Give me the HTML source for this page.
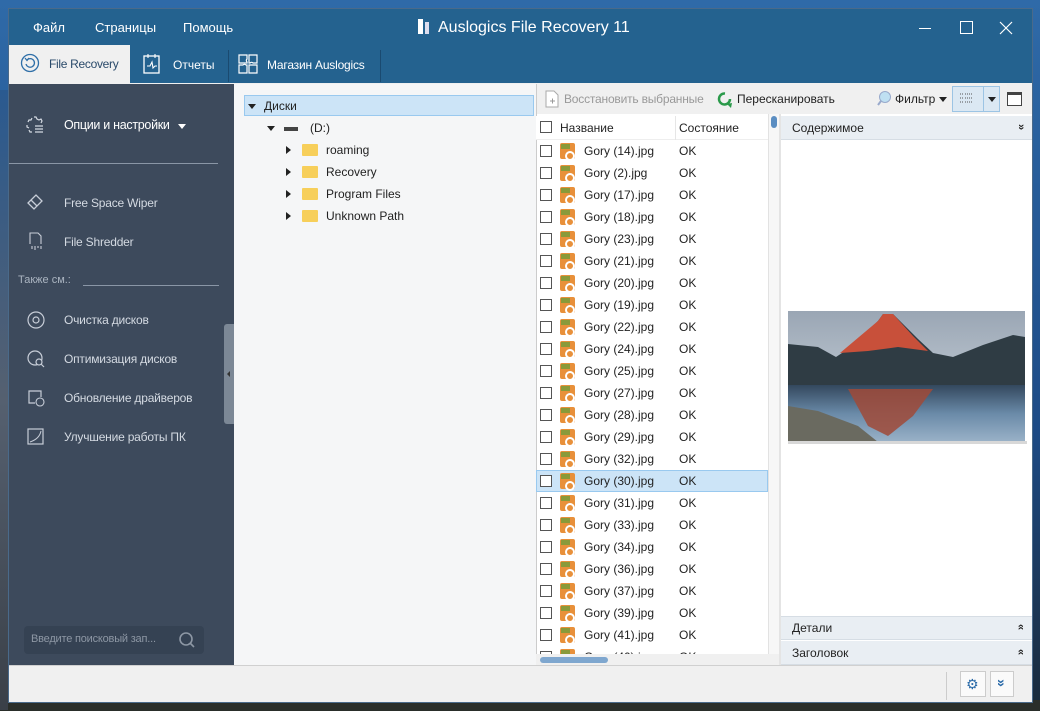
<!DOCTYPE html>
<html><head><meta charset="utf-8"><style>
*{margin:0;padding:0;box-sizing:border-box}
body{width:1040px;height:711px;overflow:hidden;position:relative;font-family:"Liberation Sans","DejaVu Sans",sans-serif;font-size:12px;color:#222;background:linear-gradient(#2f6aa8 0,#1d4b86 60%,#1a2a3a 100%)}
.a{position:absolute}
.w{color:#fff}
.row{position:absolute;left:536px;width:232px;height:22px}
.row .cb{position:absolute;left:4px;top:5px;width:12px;height:12px;border:1px solid #555;background:#fff}
.row .ic{position:absolute;left:24px;top:3px;width:15px;height:16px;background:#e8903a;border-radius:2px}
.row .ic:before{content:"";position:absolute;left:1px;top:1px;width:9px;height:5px;background:#8a9a3a}
.row .ic:after{content:"";position:absolute;left:5px;top:8px;width:6px;height:6px;border-radius:50%;border:2px solid #fff}
.row .n{position:absolute;left:48px;top:4px}
.row .s{position:absolute;left:143px;top:4px}
.side{color:#d4dae2;font-size:12px;letter-spacing:-0.2px}
.tri{width:0;height:0;border-left:4px solid transparent;border-right:4px solid transparent;border-top:5px solid #222}
.tr{width:0;height:0;border-top:4px solid transparent;border-bottom:4px solid transparent;border-left:5px solid #222}
.fold{width:16px;height:12px;background:#f7cf5a;border-radius:1px}
.chev{font-size:11px;font-weight:bold}
</style></head><body>
<div class="a" style="left:0;top:700px;width:1040px;height:11px;background:#2a2e2a"></div>
<div class="a" style="left:0;top:90px;width:8px;height:620px;background:linear-gradient(#2a5a90,#556070,#3a4048)"></div>
<div class="a" style="left:8px;top:8px;width:1025px;height:695px;background:#f0f0f0;border:1px solid #4a6a8a"></div>
<div class="a" style="left:9px;top:9px;width:1023px;height:74px;background:#24628f"></div>
<div class="a w" style="left:33px;top:20px;font-size:13px">Файл</div>
<div class="a w" style="left:95px;top:20px;font-size:13px">Страницы</div>
<div class="a w" style="left:183px;top:20px;font-size:13px">Помощь</div>
<div class="a" style="left:418px;top:19px;width:5px;height:15px;background:#fff"></div>
<div class="a" style="left:425px;top:22px;width:4px;height:12px;background:#dde"></div>
<div class="a w" style="left:438px;top:19px;font-size:16px">Auslogics File Recovery 11</div>
<div class="a" style="left:919px;top:28px;width:12px;height:1px;background:#fff"></div>
<div class="a" style="left:960px;top:21px;width:13px;height:13px;border:1px solid #fff"></div>
<svg class="a" style="left:999px;top:21px" width="14" height="14"><path d="M1 1L13 13M13 1L1 13" stroke="#fff" stroke-width="1.2"/></svg>
<div class="a" style="left:9px;top:45px;width:121px;height:38px;background:#f0f0f0"></div>
<svg class="a" style="left:20px;top:53px" width="20" height="20"><circle cx="10" cy="10" r="8.5" fill="none" stroke="#2f6fa8" stroke-width="1.3"/><path d="M7 7A4.3 4.3 0 1 1 6 11" fill="none" stroke="#2f6fa8" stroke-width="1.3"/><path d="M5 5L7 7.5L9 5" fill="none" stroke="#2f6fa8" stroke-width="1.2"/></svg>
<div class="a" style="left:49px;top:57px;color:#2a4a6a;letter-spacing:-0.3px">File Recovery</div>
<svg class="a" style="left:142px;top:53px" width="20" height="22"><rect x="2" y="3" width="15" height="17" fill="none" stroke="#fff" stroke-width="1.3"/><path d="M6 1v4M13 1v4M5 13h3l2-4 1 6 2-2h2" fill="none" stroke="#fff" stroke-width="1.1"/></svg>
<div class="a w" style="left:173px;top:58px">Отчеты</div>
<div class="a" style="left:228px;top:50px;width:1px;height:32px;background:#1a4a70"></div>
<svg class="a" style="left:236px;top:52px" width="24" height="24"><path d="M3 3h8v4a2 2 0 0 0 0 3v1H3zM13 3h8v8h-4a2 2 0 0 0-3 0h-1zM3 13h4a2 2 0 0 1 3 0h1v8H3zM13 13h8v8h-8z" fill="none" stroke="#fff" stroke-width="1.2"/></svg>
<div class="a w" style="left:267px;top:58px;letter-spacing:-0.2px">Магазин Auslogics</div>
<div class="a" style="left:380px;top:50px;width:1px;height:32px;background:#1a4a70"></div>
<div class="a" style="left:9px;top:84px;width:225px;height:581px;background:#3d4a5c"></div>
<svg class="a" style="left:25px;top:115px" width="22" height="20"><path d="M9 2l2 0 1 2 2 1 2-1 1 2-1 2M3 7l1-2 2 0 1-2M2 10v2l2 1M4 15l1 2 2 0" fill="none" stroke="#d4dae2" stroke-width="1.2"/><path d="M10 11h8M10 14h8M10 17h8" stroke="#d4dae2" stroke-width="1.2"/></svg>
<div class="a" style="left:64px;top:118px;color:#fff;font-size:12.5px;letter-spacing:-0.3px">Опции и настройки</div>
<div class="a tri" style="left:178px;top:124px;border-top-color:#fff"></div>
<div class="a" style="left:9px;top:163px;width:209px;height:1px;background:#8a96a6"></div>
<svg class="a" style="left:26px;top:193px" width="20" height="18"><path d="M2 10l8-8 6 6-8 8zM5 7l6 6" fill="none" stroke="#c8ced8" stroke-width="1.3"/></svg>
<div class="a side" style="left:64px;top:196px">Free Space Wiper</div>
<svg class="a" style="left:27px;top:231px" width="18" height="20"><path d="M3 13V2h8l3 3v8M5 15v3M8 15v4M11 15v2M14 15v3" fill="none" stroke="#c8ced8" stroke-width="1.1"/></svg>
<div class="a side" style="left:64px;top:235px">File Shredder</div>
<div class="a" style="left:18px;top:274px;color:#aab4c0;font-size:11px">Также см.:</div>
<div class="a" style="left:83px;top:285px;width:136px;height:1px;background:#8a96a6"></div>
<svg class="a" style="left:26px;top:310px" width="20" height="20"><circle cx="10" cy="10" r="8" fill="none" stroke="#c8ced8" stroke-width="1.2"/><circle cx="10" cy="10" r="3" fill="none" stroke="#c8ced8" stroke-width="1.2"/></svg>
<div class="a side" style="left:64px;top:313px">Очистка дисков</div>
<svg class="a" style="left:26px;top:349px" width="20" height="20"><circle cx="9" cy="9" r="7" fill="none" stroke="#c8ced8" stroke-width="1.2"/><circle cx="13" cy="13" r="3" fill="#3d4a5c" stroke="#c8ced8" stroke-width="1.2"/><path d="M15 15l3 3" stroke="#c8ced8" stroke-width="1.2"/></svg>
<div class="a side" style="left:64px;top:352px">Оптимизация дисков</div>
<svg class="a" style="left:26px;top:388px" width="20" height="20"><path d="M9 15H3V3h12v6" fill="none" stroke="#c8ced8" stroke-width="1.2"/><circle cx="14" cy="14" r="4" fill="none" stroke="#c8ced8" stroke-width="1.1"/></svg>
<div class="a side" style="left:64px;top:391px">Обновление драйверов</div>
<svg class="a" style="left:26px;top:427px" width="20" height="20"><rect x="2" y="2" width="15" height="15" fill="none" stroke="#c8ced8" stroke-width="1.2"/><path d="M4 15C10 13 14 9 15 4" fill="none" stroke="#c8ced8"/></svg>
<div class="a side" style="left:64px;top:430px">Улучшение работы ПК</div>
<div class="a" style="left:224px;top:324px;width:10px;height:100px;background:#7c8896;border-radius:3px 0 0 3px"></div>
<div class="a" style="left:227px;top:371px;width:0;height:0;border-top:3px solid transparent;border-bottom:3px solid transparent;border-right:3px solid #333"></div>
<div class="a" style="left:24px;top:626px;width:180px;height:28px;background:#354253;border-radius:4px"></div>
<div class="a" style="left:31px;top:633px;color:#8d97a4;font-size:11px;letter-spacing:-0.2px">Введите поисковый зап...</div>
<svg class="a" style="left:178px;top:631px" width="18" height="18"><circle cx="8" cy="8" r="6" fill="none" stroke="#8d97a4" stroke-width="1.6"/><path d="M12 12l4 4" stroke="#8d97a4" stroke-width="1.6"/></svg>
<div class="a" style="left:234px;top:84px;width:302px;height:581px;background:#f5f6f7"></div>
<div class="a" style="left:244px;top:95px;width:290px;height:21px;background:#cce4f7;border:1px solid #99c9ef"></div>
<div class="a tri" style="left:248px;top:104px"></div>
<div class="a" style="left:264px;top:99px">Диски</div>
<div class="a tri" style="left:267px;top:126px"></div>
<div class="a" style="left:284px;top:127px;width:14px;height:4px;background:#444"></div>
<div class="a" style="left:310px;top:121px">(D:)</div>
<div class="a tr" style="left:286px;top:146px"></div><div class="a fold" style="left:302px;top:144px"></div><div class="a" style="left:326px;top:143px">roaming</div>
<div class="a tr" style="left:286px;top:168px"></div><div class="a fold" style="left:302px;top:166px"></div><div class="a" style="left:326px;top:165px">Recovery</div>
<div class="a tr" style="left:286px;top:190px"></div><div class="a fold" style="left:302px;top:188px"></div><div class="a" style="left:326px;top:187px">Program Files</div>
<div class="a tr" style="left:286px;top:212px"></div><div class="a fold" style="left:302px;top:210px"></div><div class="a" style="left:326px;top:209px">Unknown Path</div>
<div class="a" style="left:536px;top:84px;width:496px;height:30px;background:#f0f0f0;border-left:1px solid #ccc"></div>
<svg class="a" style="left:544px;top:90px" width="16" height="18"><path d="M2 1h8l4 4v12H2z" fill="#fff" stroke="#aaa"/><path d="M6 11h5M8.5 8.5v5" stroke="#999"/></svg>
<div class="a" style="left:564px;top:92px;color:#999;letter-spacing:-0.2px">Восстановить выбранные</div>
<svg class="a" style="left:716px;top:90px" width="18" height="18"><path d="M14 9A5.5 5.5 0 1 1 9 3.5" fill="none" stroke="#2a9a4a" stroke-width="2.5"/><path d="M11 14l5-1-1 5z" fill="#2a9a4a"/></svg>
<div class="a" style="left:737px;top:92px">Пересканировать</div>
<svg class="a" style="left:876px;top:90px" width="16" height="17"><circle cx="9" cy="7" r="5.5" fill="#bfe0f2" stroke="#9ac"/><path d="M5 11l-3 4" stroke="#9ac" stroke-width="2"/></svg>
<div class="a" style="left:895px;top:92px">Фильтр</div>
<div class="a tri" style="left:939px;top:97px"></div>
<div class="a" style="left:952px;top:86px;width:48px;height:26px;background:#dbe8f3;border:1px solid #9cc4e4"></div>
<div class="a" style="left:983px;top:86px;width:1px;height:26px;background:#9cc4e4"></div>
<svg class="a" style="left:958px;top:92px" width="18" height="14"><path d="M2 2h3M2 6h3M2 10h3M7 2h8M7 6h8M7 10h8" stroke="#555" stroke-dasharray="1 1"/></svg>
<div class="a tri" style="left:988px;top:97px"></div>
<div class="a" style="left:1007px;top:92px;width:15px;height:14px;border:1px solid #444;border-top-width:3px;background:#fff"></div>
<div class="a" style="left:536px;top:114px;width:244px;height:551px;background:#fff;border-left:1px solid #ccc"></div>
<div class="a" style="left:536px;top:116px;width:232px;height:24px;background:#fff;border-bottom:1px solid #eee"></div>
<div class="a" style="left:675px;top:116px;width:1px;height:24px;background:#e6e6e6"></div>
<div class="a" style="left:540px;top:121px;width:12px;height:12px;border:1px solid #555"></div>
<div class="a" style="left:560px;top:121px">Название</div>
<div class="a" style="left:679px;top:121px">Состояние</div>
<div class="a" style="left:768px;top:114px;width:12px;height:540px;background:#f7f7f7;border-left:1px solid #e2e2e2"></div>
<div class="a" style="left:771px;top:116px;width:6px;height:12px;background:#5b8ec2;border-radius:3px"></div>
<div class="a" style="left:536px;top:654px;width:244px;height:11px;background:#f0f0f0"></div>
<div class="a" style="left:540px;top:657px;width:68px;height:6px;background:#7fa7cf;border-radius:3px"></div>
<div class="a" style="left:779px;top:114px;width:2px;height:551px;background:#e4e4e4"></div>
<div class="a" style="left:536px;top:140px;width:232px;height:514px;overflow:hidden">
<div style="position:relative;left:-536px;top:-140px">
<div class="row" style="top:140px"><div class="cb"></div><div class="ic"></div><div class="n">Gory (14).jpg</div><div class="s">OK</div></div>
<div class="row" style="top:162px"><div class="cb"></div><div class="ic"></div><div class="n">Gory (2).jpg</div><div class="s">OK</div></div>
<div class="row" style="top:184px"><div class="cb"></div><div class="ic"></div><div class="n">Gory (17).jpg</div><div class="s">OK</div></div>
<div class="row" style="top:206px"><div class="cb"></div><div class="ic"></div><div class="n">Gory (18).jpg</div><div class="s">OK</div></div>
<div class="row" style="top:228px"><div class="cb"></div><div class="ic"></div><div class="n">Gory (23).jpg</div><div class="s">OK</div></div>
<div class="row" style="top:250px"><div class="cb"></div><div class="ic"></div><div class="n">Gory (21).jpg</div><div class="s">OK</div></div>
<div class="row" style="top:272px"><div class="cb"></div><div class="ic"></div><div class="n">Gory (20).jpg</div><div class="s">OK</div></div>
<div class="row" style="top:294px"><div class="cb"></div><div class="ic"></div><div class="n">Gory (19).jpg</div><div class="s">OK</div></div>
<div class="row" style="top:316px"><div class="cb"></div><div class="ic"></div><div class="n">Gory (22).jpg</div><div class="s">OK</div></div>
<div class="row" style="top:338px"><div class="cb"></div><div class="ic"></div><div class="n">Gory (24).jpg</div><div class="s">OK</div></div>
<div class="row" style="top:360px"><div class="cb"></div><div class="ic"></div><div class="n">Gory (25).jpg</div><div class="s">OK</div></div>
<div class="row" style="top:382px"><div class="cb"></div><div class="ic"></div><div class="n">Gory (27).jpg</div><div class="s">OK</div></div>
<div class="row" style="top:404px"><div class="cb"></div><div class="ic"></div><div class="n">Gory (28).jpg</div><div class="s">OK</div></div>
<div class="row" style="top:426px"><div class="cb"></div><div class="ic"></div><div class="n">Gory (29).jpg</div><div class="s">OK</div></div>
<div class="row" style="top:448px"><div class="cb"></div><div class="ic"></div><div class="n">Gory (32).jpg</div><div class="s">OK</div></div>
<div class="row" style="top:470px;background:#cce4f7;border:1px solid #99c9ef"><div class="cb" style="left:3px;top:4px"></div><div class="ic" style="left:23px;top:2px"></div><div class="n" style="left:47px;top:3px">Gory (30).jpg</div><div class="s" style="left:142px;top:3px">OK</div></div>
<div class="row" style="top:492px"><div class="cb"></div><div class="ic"></div><div class="n">Gory (31).jpg</div><div class="s">OK</div></div>
<div class="row" style="top:514px"><div class="cb"></div><div class="ic"></div><div class="n">Gory (33).jpg</div><div class="s">OK</div></div>
<div class="row" style="top:536px"><div class="cb"></div><div class="ic"></div><div class="n">Gory (34).jpg</div><div class="s">OK</div></div>
<div class="row" style="top:558px"><div class="cb"></div><div class="ic"></div><div class="n">Gory (36).jpg</div><div class="s">OK</div></div>
<div class="row" style="top:580px"><div class="cb"></div><div class="ic"></div><div class="n">Gory (37).jpg</div><div class="s">OK</div></div>
<div class="row" style="top:602px"><div class="cb"></div><div class="ic"></div><div class="n">Gory (39).jpg</div><div class="s">OK</div></div>
<div class="row" style="top:624px"><div class="cb"></div><div class="ic"></div><div class="n">Gory (41).jpg</div><div class="s">OK</div></div>
<div class="row" style="top:646px"><div class="cb"></div><div class="ic"></div><div class="n">Gory (40).jpg</div><div class="s">OK</div></div>
</div></div>
<div class="a" style="left:781px;top:114px;width:251px;height:551px;background:#fff"></div>
<div class="a" style="left:781px;top:116px;width:251px;height:24px;background:#e9eef3;border-bottom:1px solid #d6dde4"></div>
<div class="a" style="left:792px;top:121px">Содержимое</div>
<div class="a chev" style="left:1018px;top:121px;transform:rotate(90deg)">&#187;</div>
<svg class="a" style="left:788px;top:311px" width="239" height="133">
<defs><linearGradient id="sky" x1="0" y1="0" x2="0" y2="1"><stop offset="0" stop-color="#9aa6b4"/><stop offset="1" stop-color="#d4dce4"/></linearGradient>
<linearGradient id="wat" x1="0" y1="0" x2="0" y2="1"><stop offset="0" stop-color="#33485e"/><stop offset=".5" stop-color="#6a8aa8"/><stop offset="1" stop-color="#9ab2c8"/></linearGradient></defs>
<rect width="237" height="131" fill="url(#sky)"/>
<path d="M0 33L30 36 48 46 60 38 90 10 95 3 105 3 130 28 145 42 165 46 195 34 225 24 237 26V76H0z" fill="#2f3c44"/>
<path d="M52 42L90 10 95 3 105 3 125 25 140 40 110 36 80 40z" fill="#c8503a"/>
<rect y="74" width="237" height="57" fill="url(#wat)"/>
<path d="M60 78L145 78 125 105 100 125 80 115z" fill="#a04a38" opacity=".85"/>
<path d="M0 95L30 100 70 115 90 131H0z" fill="#6a6a60"/>
<rect x="0" y="130" width="239" height="3" fill="#d8d8d8"/>
</svg>
<div class="a" style="left:781px;top:616px;width:251px;height:24px;background:#e9eef3;border-top:1px solid #d6dde4;border-bottom:1px solid #d6dde4"></div>
<div class="a" style="left:792px;top:621px">Детали</div>
<div class="a chev" style="left:1018px;top:621px;transform:rotate(-90deg)">&#187;</div>
<div class="a" style="left:781px;top:641px;width:251px;height:24px;background:#e9eef3;border-bottom:1px solid #d6dde4"></div>
<div class="a" style="left:792px;top:646px">Заголовок</div>
<div class="a chev" style="left:1018px;top:646px;transform:rotate(-90deg)">&#187;</div>
<div class="a" style="left:9px;top:665px;width:1023px;height:37px;background:#f0f0f0;border-top:1px solid #d0d0d0"></div>
<div class="a" style="left:946px;top:672px;width:1px;height:28px;background:#ccc"></div>
<div class="a" style="left:960px;top:671px;width:26px;height:26px;background:#fafafa;border:1px solid #ccc"></div>
<div class="a" style="left:966px;top:676px;color:#2a6aa8;font-size:14px">&#9881;</div>
<div class="a" style="left:990px;top:671px;width:24px;height:26px;background:#fafafa;border:1px solid #ccc"></div>
<div class="a" style="left:998px;top:675px;color:#2a6aa8;font-size:14px;font-weight:bold;transform:rotate(90deg)">&#187;</div>
</body></html>
